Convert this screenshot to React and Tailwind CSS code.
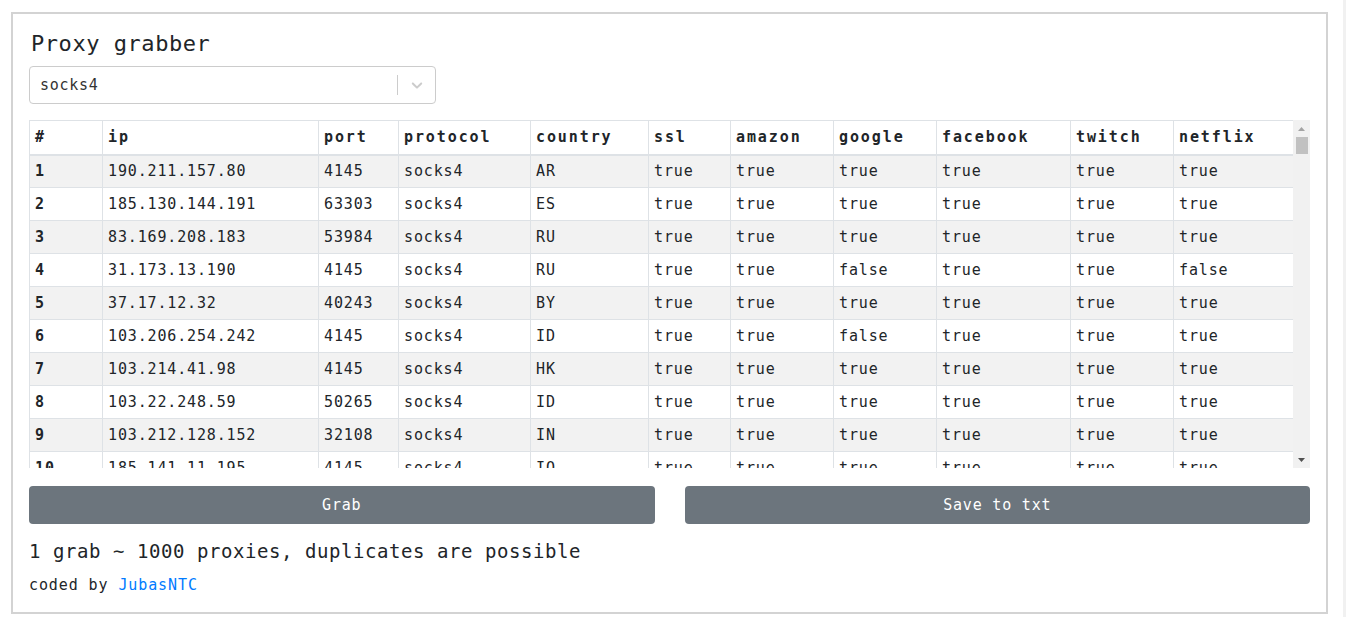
// App.jsx - Proxy grabber page
import React, { useState } from 'react';

const FONT = { fontFamily: '"DejaVu Sans Mono", "Liberation Mono", monospace' };

const columns = ['#', 'ip', 'port', 'protocol', 'country', 'ssl', 'amazon', 'google', 'facebook', 'twitch', 'netflix'];
const colWidths = ['w-[73px]', 'w-[216px]', 'w-[80px]', 'w-[132px]', 'w-[118px]', 'w-[82px]', 'w-[103px]', 'w-[103px]', 'w-[134px]', 'w-[103px]', 'w-[120px]'];

const rows = [
  ['190.211.157.80', '4145', 'AR', [1, 1, 1, 1, 1, 1]],
  ['185.130.144.191', '63303', 'ES', [1, 1, 1, 1, 1, 1]],
  ['83.169.208.183', '53984', 'RU', [1, 1, 1, 1, 1, 1]],
  ['31.173.13.190', '4145', 'RU', [1, 1, 0, 1, 1, 0]],
  ['37.17.12.32', '40243', 'BY', [1, 1, 1, 1, 1, 1]],
  ['103.206.254.242', '4145', 'ID', [1, 1, 0, 1, 1, 1]],
  ['103.214.41.98', '4145', 'HK', [1, 1, 1, 1, 1, 1]],
  ['103.22.248.59', '50265', 'ID', [1, 1, 1, 1, 1, 1]],
  ['103.212.128.152', '32108', 'IN', [1, 1, 1, 1, 1, 1]],
  ['185.141.11.195', '4145', 'IQ', [1, 1, 1, 1, 1, 1]],
];

const cell = 'h-[33px] p-0 pl-[5px] border border-[#dee2e6] text-[15px] tracking-[0.85px]';

// classic scrollbar next to the table
const Scrollbar = () => (
  <div className="w-[17px] h-[348px] bg-[#f1f1f1] flex flex-col items-center">
    <div className="h-[17px] flex items-center justify-center">
      <svg width="7" height="4" viewBox="0 0 7 4"><path d="M3.5 0L7 4H0z" fill="#a3a3a3" /></svg>
    </div>
    <div className="w-[12px] h-[17px] bg-[#c1c1c1]"></div>
    <div className="flex-1"></div>
    <div className="h-[17px] flex items-center justify-center">
      <svg width="7" height="4" viewBox="0 0 7 4"><path d="M0 0H7L3.5 4z" fill="#505050" /></svg>
    </div>
  </div>
);

const App = () => {
  const [protocol] = useState('socks4');

  return (
    <div className="flex w-[1346px] h-[617px] bg-white text-[#212529] overflow-hidden" style={FONT}>
      {/* Card */}
      <div className="mt-[12px] ml-[11px] w-[1317px] h-[602px] border-2 border-[#d3d3d3] px-[16px] pt-[16px]">
        <h1 className="text-[22px] leading-[28px] tracking-[0.55px] ml-[2px]">Proxy grabber</h1>

        {/* Protocol select */}
        <div className="mt-[8px] w-[407px] h-[38px] border border-[#cccccc] rounded-[4px] flex items-center">
          <div className="flex-1 pl-[10px] text-[15px] tracking-[0.7px] text-[#333333]">{protocol}</div>
          <div className="w-px h-[20px] bg-[#cccccc]"></div>
          <div className="w-[37px] flex justify-center">
            <svg width="18" height="18" viewBox="0 0 20 20" fill="#cccccc">
              <path d="M4.516 7.548c0.436-0.446 1.043-0.481 1.576 0l3.908 3.747 3.908-3.747c0.533-0.481 1.141-0.446 1.574 0 0.436 0.445 0.408 1.197 0 1.615-0.406 0.418-4.695 4.502-4.695 4.502-0.217 0.223-0.502 0.335-0.787 0.335s-0.57-0.112-0.789-0.335c0 0-4.287-4.084-4.695-4.502s-0.436-1.17 0-1.615z" />
            </svg>
          </div>
        </div>

        {/* Proxy table */}
        <div className="mt-[16px] w-[1281px] flex">
          <div className="w-[1264px] h-[348px] overflow-hidden">
            <table className="w-[1264px] border-collapse table-fixed">
              <thead>
                <tr>
                  {columns.map((col, i) => (
                    <th
                      key={col}
                      className={`${colWidths[i]} h-[34px] p-0 pl-[5px] text-left align-middle font-bold text-[15px] tracking-[1.9px] border border-[#dee2e6] border-b-2`}
                    >
                      {col}
                    </th>
                  ))}
                </tr>
              </thead>
              <tbody>
                {rows.map((row, idx) => (
                  <tr key={idx} className={idx % 2 === 0 ? 'bg-[#f2f2f2]' : 'bg-white'}>
                    <td className={`${cell} font-bold`}>{idx + 1}</td>
                    <td className={cell}>{row[0]}</td>
                    <td className={cell}>{row[1]}</td>
                    <td className={cell}>socks4</td>
                    <td className={cell}>{row[2]}</td>
                    {row[3].map((v, j) => (
                      <td key={j} className={cell}>
                        {v ? 'true' : 'false'}
                      </td>
                    ))}
                  </tr>
                ))}
              </tbody>
            </table>
          </div>
          <Scrollbar />
        </div>

        {/* Buttons */}
        <div className="mt-[18px] grid grid-cols-2 gap-[30px] w-[1281px]">
          <button className="h-[38px] rounded-[4px] bg-[#6c757d] text-white text-[15px] tracking-[0.8px]">Grab</button>
          <button className="h-[38px] rounded-[4px] bg-[#6c757d] text-white text-[15px] tracking-[0.8px]">Save to txt</button>
        </div>

        <p className="mt-[12px] text-[19px] leading-[30px] tracking-[0.56px]">1 grab ~ 1000 proxies, duplicates are possible</p>
        <p className="mt-[7px] text-[15px] leading-[24px] tracking-[0.9px]">
          coded by <a href="#" className="text-[#007bff]">JubasNTC</a>
        </p>
      </div>

      {/* page scrollbar edge */}
      <div className="ml-auto w-[3px] h-[617px] bg-[#f1f1f1]"></div>
    </div>
  );
};

export default App;
